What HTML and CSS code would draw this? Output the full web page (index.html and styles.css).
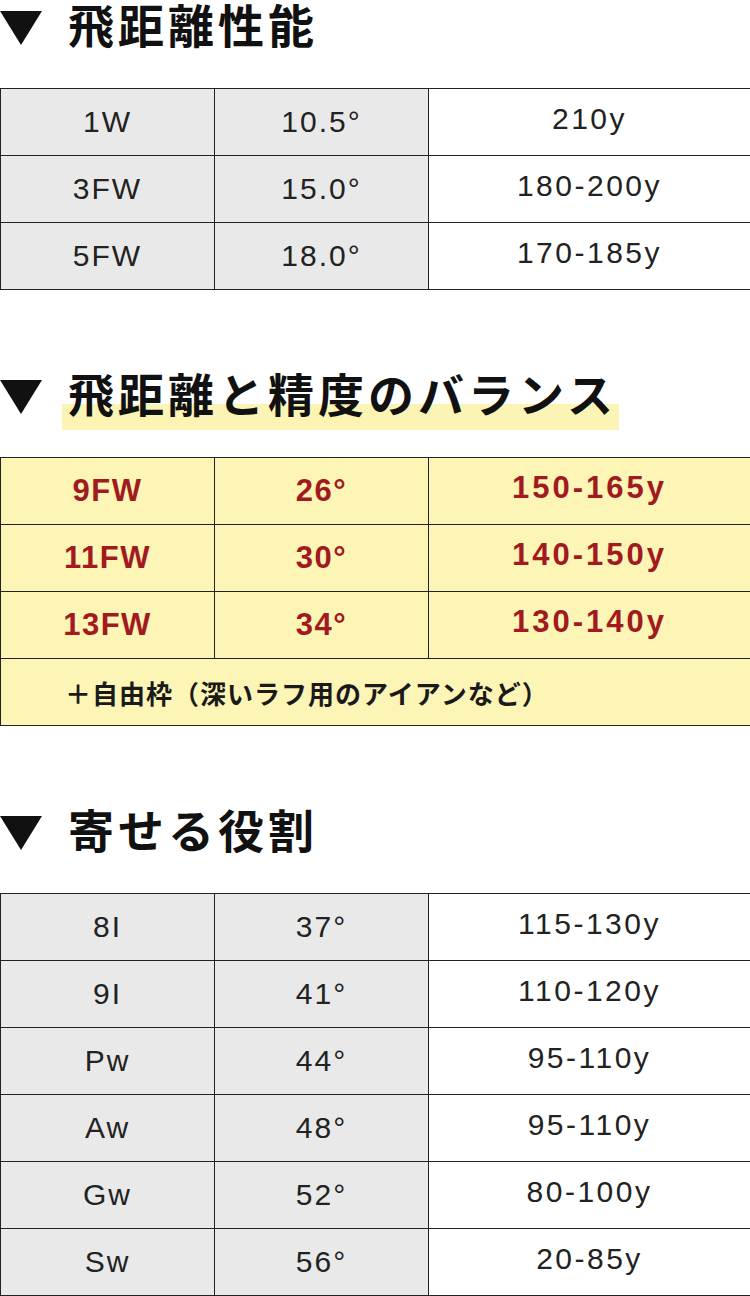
FILE: index.html
```html
<!DOCTYPE html>
<html lang="ja">
<head>
<meta charset="utf-8">
<title>クラブ構成</title>
<link rel="stylesheet" href="styles.css">
</head>
<body>
<section class="block">
  <h2 class="heading">
    <svg class="tri" viewBox="0 0 42 34" aria-hidden="true"><polygon points="0,0 42,0 21,34"/></svg>
    <span class="title">飛距離性能</span>
  </h2>
  <table class="spec">
    <colgroup><col class="c1"><col class="c2"><col class="c3"></colgroup>
    <tr><td class="g">1W</td><td class="g">10.5°</td><td class="d">210y</td></tr>
    <tr><td class="g">3FW</td><td class="g">15.0°</td><td class="d">180-200y</td></tr>
    <tr><td class="g">5FW</td><td class="g">18.0°</td><td class="d">170-185y</td></tr>
  </table>
</section>

<section class="block">
  <h2 class="heading">
    <svg class="tri" viewBox="0 0 42 34" aria-hidden="true"><polygon points="0,0 42,0 21,34"/></svg>
    <span class="title mark">飛距離と精度のバランス</span>
  </h2>
  <table class="spec yellow">
    <colgroup><col class="c1"><col class="c2"><col class="c3"></colgroup>
    <tr><td>9FW</td><td>26°</td><td class="d">150-165y</td></tr>
    <tr><td>11FW</td><td>30°</td><td class="d">140-150y</td></tr>
    <tr><td>13FW</td><td>34°</td><td class="d">130-140y</td></tr>
    <tr><td class="note" colspan="3">＋自由枠（深いラフ用のアイアンなど）</td></tr>
  </table>
</section>

<section class="block">
  <h2 class="heading">
    <svg class="tri" viewBox="0 0 42 34" aria-hidden="true"><polygon points="0,0 42,0 21,34"/></svg>
    <span class="title">寄せる役割</span>
  </h2>
  <table class="spec">
    <colgroup><col class="c1"><col class="c2"><col class="c3"></colgroup>
    <tr><td class="g">8I</td><td class="g">37°</td><td class="d">115-130y</td></tr>
    <tr><td class="g">9I</td><td class="g">41°</td><td class="d">110-120y</td></tr>
    <tr><td class="g">Pw</td><td class="g">44°</td><td class="d">95-110y</td></tr>
    <tr><td class="g">Aw</td><td class="g">48°</td><td class="d">95-110y</td></tr>
    <tr><td class="g">Gw</td><td class="g">52°</td><td class="d">80-100y</td></tr>
    <tr><td class="g">Sw</td><td class="g">56°</td><td class="d">20-85y</td></tr>
  </table>
</section>
</body>
</html>
```
FILE: styles.css
```css
html, body {
  margin: 0;
  padding: 0;
  background: #ffffff;
}
body {
  width: 750px;
  font-family: "Liberation Sans", "Noto Sans CJK JP", sans-serif;
  color: #222222;
}
.block + .block {
  margin-top: 79px;
}
.heading {
  display: flex;
  align-items: flex-start;
  height: 52px;
  margin: 0 0 36px 0;
  font-family: "Noto Sans CJK JP", sans-serif;
  font-weight: 700;
  font-size: 46px;
  line-height: 46px;
  letter-spacing: 4px;
  color: #111111;
}
.tri {
  flex-shrink: 0;
  width: 42px;
  height: 34px;
  margin: 11px 26px 0 0;
  fill: #111111;
}
.title {
  display: inline-block;
}
.mark {
  margin-left: -6px;
  padding: 0 2px 0 6px;
  height: 61px;
  background: linear-gradient(to bottom, transparent 35px, #fcf4b4 35px);
}
.spec {
  width: 750px;
  border-collapse: collapse;
  table-layout: fixed;
}
.c1, .c2 { width: 214px; }
.c3 { width: 322px; }
.spec tr {
  height: 67px;
}
.spec td {
  border: 1px solid #222222;
  padding: 0;
  text-align: center;
  vertical-align: middle;
  font-size: 30px;
  letter-spacing: 2px;
  color: #222222;
}
.spec td.g {
  background: #e9e9e9;
}
.spec td.d {
  padding-bottom: 6px;
  letter-spacing: 2.5px;
}
.yellow td {
  background: #fdf5b6;
  font-weight: 700;
  font-size: 31px;
  letter-spacing: 1.5px;
  color: #a01a1f;
}
.yellow td.d {
  letter-spacing: 3px;
}
.yellow td.note {
  text-align: left;
  padding-left: 64px;
  font-family: "Noto Sans CJK JP", sans-serif;
  font-size: 26px;
  letter-spacing: 1px;
  color: #1a1a1a;
}
```
